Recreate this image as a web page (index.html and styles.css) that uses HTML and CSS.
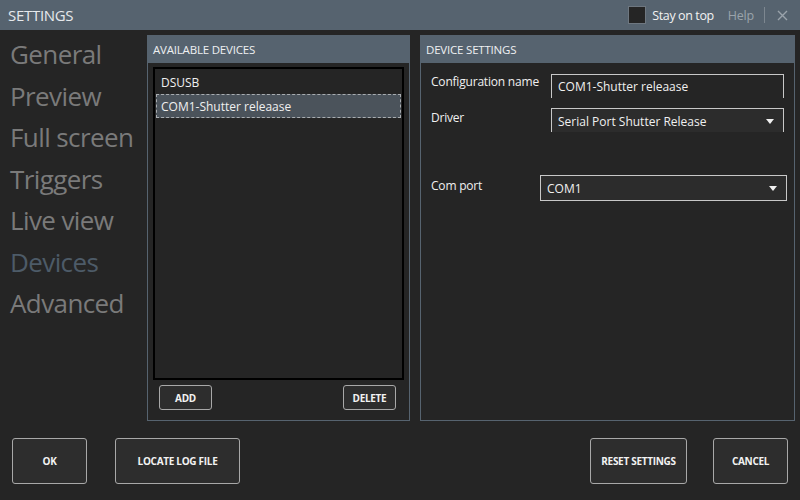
FILE: index.html
```html
<!DOCTYPE html>
<html>
<head>
<meta charset="utf-8">
<link rel="stylesheet" href="styles.css">
</head>
<body>
<div class="window">
  <div class="titlebar">
    <div class="title">SETTINGS</div>
    <div class="title-actions">
      <span class="checkbox"></span>
      <span class="stay">Stay on top</span>
      <span class="help">Help</span>
      <span class="sep"></span>
      <svg class="close" width="11" height="11" viewBox="0 0 11 11"><path d="M1 1L10 10M10 1L1 10" stroke="#9aa3ab" stroke-width="1.4"/></svg>
    </div>
  </div>
  <div class="main">
    <nav class="nav">
      <div class="nav-item">General</div>
      <div class="nav-item">Preview</div>
      <div class="nav-item">Full screen</div>
      <div class="nav-item">Triggers</div>
      <div class="nav-item">Live view</div>
      <div class="nav-item active">Devices</div>
      <div class="nav-item">Advanced</div>
    </nav>
    <section class="panel panel-left">
      <div class="panel-header">AVAILABLE DEVICES</div>
      <div class="panel-body">
        <div class="listbox">
          <div class="list-item">DSUSB</div>
          <div class="list-item selected">COM1-Shutter releaase</div>
        </div>
        <div class="list-buttons">
          <button class="btn small">ADD</button>
          <button class="btn small">DELETE</button>
        </div>
      </div>
    </section>
    <section class="panel panel-right">
      <div class="panel-header">DEVICE SETTINGS</div>
      <div class="form">
        <div class="row row-name">
          <label class="lbl">Configuration name</label>
          <div class="input open">COM1-Shutter releaase</div>
        </div>
        <div class="row row-driver">
          <label class="lbl">Driver</label>
          <div class="input open select">Serial Port Shutter Release<span class="arrow"></span></div>
        </div>
        <div class="row row-port">
          <label class="lbl">Com port</label>
          <div class="input closed select">COM1<span class="arrow"></span></div>
        </div>
      </div>
    </section>
  </div>
  <div class="footer">
    <div class="footer-group">
      <button class="btn big ok">OK</button>
      <button class="btn big locate">LOCATE LOG FILE</button>
    </div>
    <div class="footer-group">
      <button class="btn big reset">RESET SETTINGS</button>
      <button class="btn big cancel">CANCEL</button>
    </div>
  </div>
</div>
</body>
</html>
```
FILE: styles.css
```css
* { box-sizing: border-box; }
html, body { margin: 0; padding: 0; }
body {
  width: 800px;
  height: 500px;
  overflow: hidden;
  background: #252525;
  font-family: "Open Sans", "Noto Sans", sans-serif;
  color: #e8e8e8;
}
.window { width: 800px; height: 500px; display: flex; flex-direction: column; }

.titlebar {
  height: 30px;
  background: #56636f;
  display: flex;
  align-items: center;
  justify-content: space-between;
  padding: 0 12px 0 8px;
}
.title { font-size: 15px; color: #e6e9ec; letter-spacing: -0.3px; }
.title-actions { display: flex; align-items: center; }
.checkbox {
  width: 18px; height: 18px;
  background: #252525;
  border: 1px solid #6e7780;
  margin-right: 6px;
}
.stay { font-size: 12.5px; color: #f2f2f2; margin-right: 14px; letter-spacing: -0.4px; }
.help { font-size: 12.5px; color: #9aa3ab; margin-right: 10px; letter-spacing: -0.2px; }
.sep { width: 1px; height: 16px; background: #7d8790; margin-right: 12px; }
.close { display: block; }

.main {
  display: flex;
  padding-top: 5px;
  height: 390px;
}
.nav {
  width: 147px;
  padding: 0 0 0 10px;
  margin-top: -1px;
}
.nav-item {
  font-size: 26px;
  line-height: 41.5px;
  color: #7a7a7a;
  letter-spacing: -0.6px;
  white-space: nowrap;
}
.nav-item.active { color: #4d5b68; }

.panel {
  border: 1px solid #56636f;
  height: 386px;
  display: flex;
  flex-direction: column;
}
.panel-left { width: 263px; }
.panel-right { width: 375px; margin-left: 10px; }
.panel-header {
  height: 27px;
  background: #56636f;
  font-size: 11.5px;
  color: #eef0f2;
  display: flex;
  align-items: center;
  padding-left: 5px;
  letter-spacing: -0.2px;
}
.panel-body {
  flex: 1;
  padding: 4px 5px 0 5px;
  display: flex;
  flex-direction: column;
}
.listbox {
  height: 313px;
  border: 2px solid #000;
  padding: 1px 1px;
}
.list-item {
  height: 24px;
  font-size: 12px;
  display: flex;
  align-items: center;
  padding-left: 5px;
  color: #f0f0f0;
}
.list-item.selected {
  background: #4b535b;
  border: 1px dashed #a9adb1;
  padding-left: 4px;
}
.list-buttons {
  display: flex;
  justify-content: space-between;
  padding: 5px 8px 0 6px;
}
.btn {
  font-family: "Open Sans", "Noto Sans", sans-serif;
  font-weight: 700;
  color: #f2f2f2;
  background: #2d2d2d;
  border: 1px solid #a8a8a8;
  border-radius: 3px;
  padding: 0;
  letter-spacing: -0.3px;
}
.btn.small { width: 53px; height: 25px; font-size: 10px; }

.form {
  padding: 10px 0 0 10px;
  display: flex;
  flex-direction: column;
}
.row { display: flex; position: relative; }
.lbl { font-size: 12px; color: #f0f0f0; letter-spacing: -0.2px; flex-shrink: 0; }
.row-name { height: 35px; }
.row-name .lbl { width: 120px; }
.row-name .input { margin-top: 1px; }
.row-driver { height: 67px; }
.row-driver .lbl { width: 120px; padding-top: 1px; }
.row-driver .input { padding-top: 2px; }
.row-port .lbl { width: 109px; padding-top: 2px; }
.input {
  font-size: 12px;
  color: #f0f0f0;
  display: flex;
  align-items: center;
  padding-left: 6px;
  height: 24px;
  position: relative;
  flex-shrink: 0;
}
.input.open {
  width: 233px;
  border: 1px solid #c8c8c8;
  border-bottom: none;
}
.input.open.select { background: #2c2c2c; }
.input.closed {
  width: 247px;
  height: 26px;
  border: 1px solid #c8c8c8;
  background: #2c2c2c;
}
.arrow {
  position: absolute;
  right: 9px;
  top: 50%;
  margin-top: -2px;
  width: 0; height: 0;
  border-left: 4px solid transparent;
  border-right: 4px solid transparent;
  border-top: 5px solid #f0f0f0;
}

.footer {
  flex: 1;
  display: flex;
  justify-content: space-between;
  padding: 18px 12px 0 12px;
}
.footer-group { display: flex; gap: 28px; }
.footer-group + .footer-group { gap: 26px; }
.btn.big { height: 46px; font-size: 10px; }
.ok { width: 75px; }
.locate { width: 125px; }
.reset { width: 97px; }
.cancel { width: 75px; }
```
